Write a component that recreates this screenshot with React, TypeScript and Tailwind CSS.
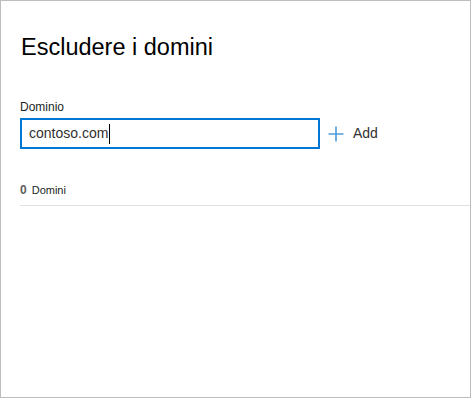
import React from 'react';

const PlusIcon: React.FC = () => (
  <svg width="16" height="16" viewBox="0 0 16 16" className="shrink-0">
    <path d="M8 0.5v15M0.5 8h15" stroke="#4f9bd9" strokeWidth="1.6" fill="none" />
  </svg>
);

const App: React.FC = () => {
  return (
    <div
      className="w-[471px] h-[398px] border border-[#bdbdbd] bg-white box-border"
      style={{ fontFamily: '"Liberation Sans", Arial, sans-serif' }}
    >
      <div className="pl-[19px] pt-[32px]">
        <h1 className="text-[23.5px] leading-[28px] text-black ml-[1px]">Escludere i domini</h1>

        <label className="block mt-[38px] text-[12px] leading-[16px] text-[#201f1e]">Dominio</label>
        <div className="flex items-center mt-[3px]">
          <div className="w-[300px] h-[31px] border-2 border-[#0078d4] flex items-center pl-[7px]">
            <span className="text-[14px] text-[#323130]">contoso.com</span>
            <span className="ml-[1px] w-[1px] h-[20px] bg-black" />
          </div>
          <button className="flex items-center ml-[8px] gap-[9px] text-[14px] text-[#323130]">
            <PlusIcon />
            <span>Add</span>
          </button>
        </div>

        <div className="mt-[33px] flex items-baseline gap-[5px] pb-[7px] border-b border-[#e1e1e1]">
          <span className="text-[12px] leading-[16px] font-semibold text-[#605e5c]">0</span>
          <span className="text-[11px] leading-[16px] text-[#201f1e]">Domini</span>
        </div>
      </div>
    </div>
  );
};

export default App;
